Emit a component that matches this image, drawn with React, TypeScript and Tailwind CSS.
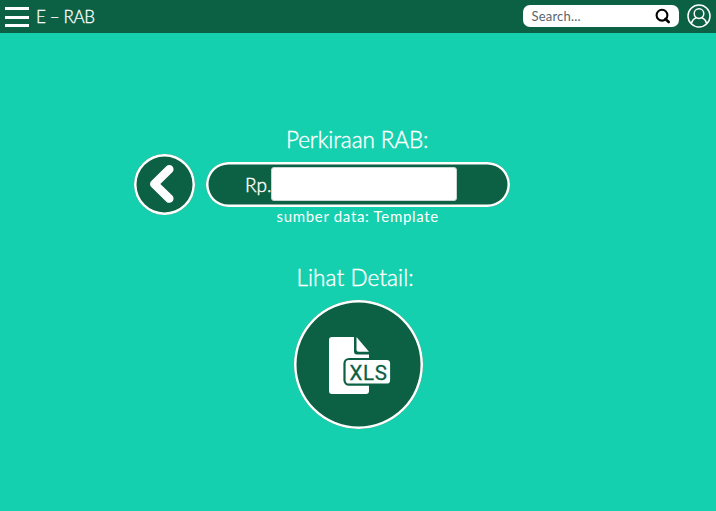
import React from "react";

function Header() {
  return (
    <header className="flex h-[33px] items-center bg-[#0c6144] pl-[5px] pr-[5px] text-white">
      <button aria-label="Menu" className="mt-px flex h-5 w-6 flex-col justify-between">
        <span className="h-[3px] w-6 bg-white" />
        <span className="h-[3px] w-6 bg-white" />
        <span className="h-[3px] w-6 bg-white" />
      </button>
      <h1 className="ml-[7px] text-[17px] font-light leading-[33px] tracking-[-0.35px] [-webkit-text-stroke:0.3px_#fff]">E – RAB</h1>
      <div className="mb-px ml-auto flex h-[22px] w-[156px] items-center rounded-[7px] bg-white pl-[9px] pr-[7.5px]">
        <span className="flex-1 text-[13px] leading-[22px] tracking-[0.2px] text-[#59656e]">Search...</span>
        <svg className="h-4 w-4" viewBox="0 0 16 16" fill="none" stroke="#000">
          <circle cx="7" cy="7.2" r="5.4" strokeWidth="2.1" />
          <path d="M10.5 11 13.7 14" strokeWidth="2.6" strokeLinecap="round" />
        </svg>
      </div>
      <svg className="mb-px ml-[8.5px] h-6 w-6" viewBox="0 0 24 24" fill="none" stroke="#fff" strokeWidth="1.5">
        <circle cx="12" cy="12" r="11" />
        <circle cx="12" cy="9.6" r="4.8" />
        <path d="M4.4 19.6C5.2 16.2 7 14.4 9.3 13.7M14.7 13.7C17 14.4 18.8 16.2 19.6 19.6" />
      </svg>
    </header>
  );
}

export default function App() {
  return (
    <div className="h-[511px] w-[716px] overflow-hidden bg-[#14d0ae] font-['Lato','Open_Sans',sans-serif] font-normal text-white">
      <Header />
      <main className="flex flex-col">
        <h2 className="ml-[286px] mt-[92px] h-[28.5px] whitespace-nowrap text-[22.5px] font-light leading-[30px] tracking-[-0.1px] [-webkit-text-stroke:0.4px_#fff]">Perkiraan RAB:</h2>
        <div className="ml-[133.5px] flex h-[61px] items-center gap-[11.5px]">
          <button aria-label="Kembali" className="flex h-[61px] w-[61px] items-center justify-center rounded-full bg-[#0c6144] shadow-[inset_0_0_0_2.5px_#fff]">
            <svg className="h-[56px] w-[56px] shrink-0" viewBox="136 156 56 56" fill="none" stroke="#fff" strokeWidth="8.5" strokeLinecap="round" strokeLinejoin="round">
              <path d="M169.3 169.3 154.3 184 169.3 198.6" />
            </svg>
          </button>
          <div className="flex h-[45px] w-[304px] items-center rounded-full bg-[#0c6144] pl-[39px] shadow-[inset_0_0_0_2.5px_#fff]">
            <span className="w-[26px] whitespace-nowrap text-[19px] font-light leading-[39px] [-webkit-text-stroke:0.4px_#fff]">Rp.</span>
            <input aria-label="Perkiraan RAB" className="h-[34px] w-[186px] rounded-[3px] border border-[#c9d6d3] bg-white" />
          </div>
        </div>
        <p className="-mt-[9px] ml-[276.5px] h-5 whitespace-nowrap text-[15px] leading-5 tracking-[0.68px]">sumber data: Template</p>
        <h2 className="ml-[296.5px] mt-[37px] h-[37px] whitespace-nowrap text-[22.5px] font-light leading-[30px] tracking-[0.1px] [-webkit-text-stroke:0.4px_#fff]">Lihat Detail:</h2>
        <button aria-label="Unduh XLS" className="ml-[294px] flex h-[129px] w-[129px] items-center justify-center rounded-full bg-[#0c6144] shadow-[inset_0_0_0_2.5px_#fff]">
          <svg className="h-[123px] w-[123px] shrink-0" viewBox="297 303.5 123 123">
            <path d="M332 337.5H354V352Q354 355 357 355H369V391.5Q369 394.5 366 394.5H332Q329 394.5 329 391.5V340.5Q329 337.5 332 337.5Z" fill="#fff" />
            <path d="M356.5 337.5 369 352.3H358.5Q356.5 352.3 356.5 350.3Z" fill="#fff" />
            <rect x="344.5" y="359.5" width="46.7" height="25.7" rx="4.5" fill="#fff" stroke="#0c6144" strokeWidth="2.2" />
            <text x="349.5" y="380" textLength="37.5" fill="#0c6144" stroke="#0c6144" strokeWidth="0.3" fontSize="20.5" fontWeight="400" fontFamily="Roboto, sans-serif">XLS</text>
          </svg>
        </button>
      </main>
    </div>
  );
}
